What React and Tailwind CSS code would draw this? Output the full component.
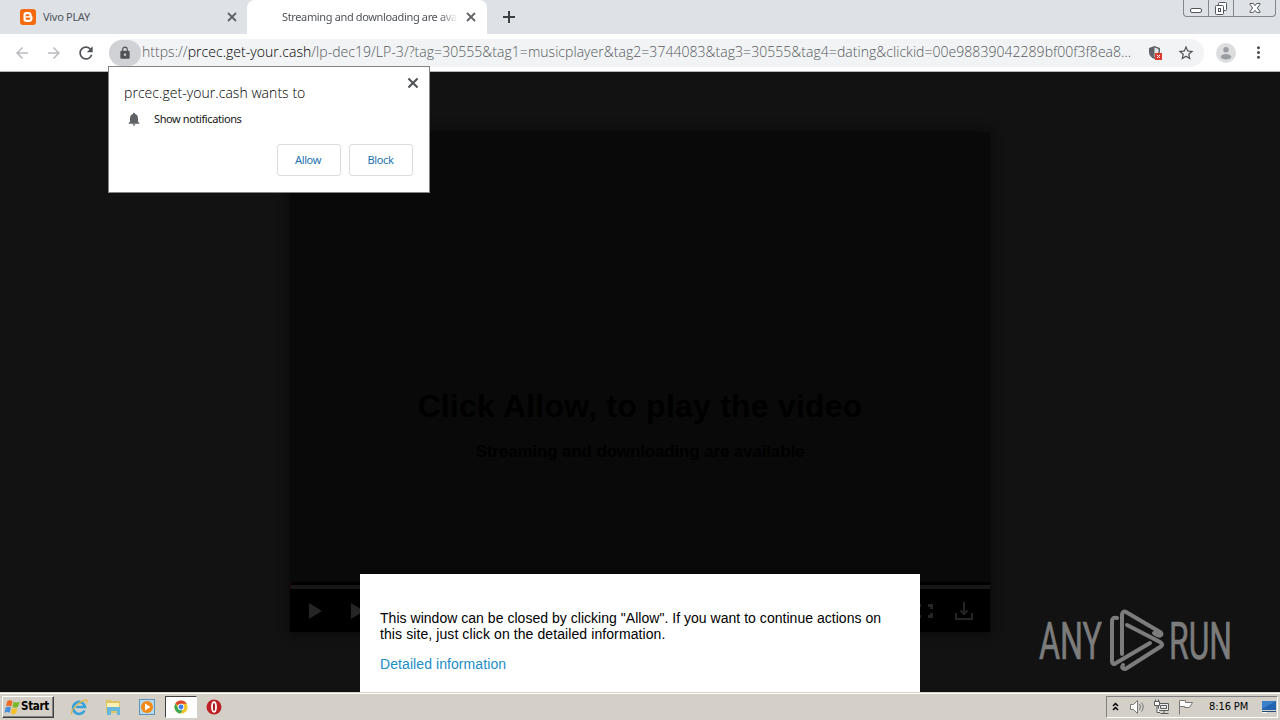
import React from 'react';
import {
  MdArrowBack,
  MdArrowForward,
  MdRefresh,
  MdLock,
  MdStarBorder,
  MdMoreVert,
  MdNotifications,
} from 'react-icons/md';

const CloseIcon = ({ className }) => (
  <svg viewBox="0 0 14 14" className={className} fill="none" stroke="currentColor" strokeWidth="1.8">
    <path d="M3 3l8 8M11 3l-8 8" />
  </svg>
);

const TabStrip = () => (
  <div className="flex h-[34px] shrink-0 bg-[#dee1e6] font-['Noto_Sans',sans-serif] text-[11px] text-[#50545a]">
    <div className="flex w-[247px] items-center pr-[8px] pl-5">
      <div className="flex h-4 w-4 items-center justify-center rounded-[3px] bg-[#f56a0e]">
        <svg viewBox="0 0 16 16" className="h-4 w-4" fill="none" stroke="white" strokeWidth="2.2">
          <path d="M4.6 5.8a1.6 1.6 0 0 1 1.6-1.6h2.3c1.2 0 2 .8 2 2v.9c0 .5.9.4.9 1v1.4c0 1.4-1 2.3-2.3 2.3H6.2a1.6 1.6 0 0 1-1.6-1.6z" />
          <path d="M6 7.9h4" strokeWidth="1.4" />
        </svg>
      </div>
      <span className="ml-[7px] flex-1 tracking-[-0.3px]">Vivo PLAY</span>
      <CloseIcon className="h-[14px] w-[14px] text-[#5f6368]" />
    </div>
    <div className="flex w-[240px] items-center rounded-t-lg bg-white pr-[9px] pl-[35px]">
      <div className="w-[176px] overflow-hidden whitespace-nowrap tracking-[-0.36px] [mask-image:linear-gradient(90deg,black_90%,transparent)]">
        Streaming and downloading are available
      </div>
      <div className="flex-1" />
      <CloseIcon className="h-[14px] w-[14px] text-[#5f6368]" />
    </div>
    <svg viewBox="0 0 18 18" className="mt-[8px] ml-[13px] h-[18px] w-[18px]" stroke="#3c4043" strokeWidth="2">
      <path d="M9 3v12M3 9h12" />
    </svg>
    <div className="flex-1" />
    <div className="mr-[4px] flex h-[17px] rounded-b-[4px] border border-t-0 border-[#83878e] text-[#51555c]">
      <div className="flex w-[25px] justify-center border-r border-[#83878e]">
        <svg width="14" height="16" fill="white" stroke="currentColor">
          <rect x="1.5" y="8.5" width="11" height="4" rx="1.5" />
        </svg>
      </div>
      <div className="flex w-[25px] justify-center border-r border-[#83878e]">
        <svg width="14" height="16" fill="white" stroke="currentColor">
          <rect x="4.5" y="2.5" width="8" height="8" rx="1" />
          <rect x="1.5" y="5.5" width="8" height="9" rx="1" />
          <rect x="4.5" y="8.5" width="2" height="3" />
        </svg>
      </div>
      <div className="flex w-[41px] justify-center">
        <svg width="14" height="16" fill="white" stroke="currentColor">
          <path d="M2 3.5h3.3L7 5.7l1.7-2.2H12v1L9.3 8l2.7 3.4v1H8.7L7 10.3l-1.7 2.1H2v-1L4.7 8 2 4.5z" />
        </svg>
      </div>
    </div>
  </div>
);

const Toolbar = () => (
  <div className="flex h-[38px] shrink-0 items-center border-b border-[#b4b6b9] bg-white pl-[13px]">
    <MdArrowBack className="h-[18px] w-[18px] text-[#b9bbbe]" />
    <MdArrowForward className="ml-[14px] h-[18px] w-[18px] text-[#b9bbbe]" />
    <MdRefresh className="ml-[13px] h-5 w-5 text-[#4f5357]" />
    <div className="ml-[13px] flex h-[28px] w-[1095px] items-center rounded-full bg-[#f1f3f4]">
      <div className="flex h-[26px] w-[32px] shrink-0 items-center justify-center rounded-full bg-[#d0d2d5]">
        <MdLock className="h-[14px] w-[14px] text-[#505357]" />
      </div>
      <div className="w-[996px] shrink-0 pb-[2px] pl-px whitespace-nowrap font-['Open_Sans',sans-serif] text-[14px] font-light tracking-[0.04px] text-[#55595d]">
        https://<span className="text-black">prcec.get-your.cash</span>
        /lp-dec19/LP-3/?tag=30555&amp;tag1=musicplayer&amp;tag2=3744083&amp;tag3=30555&amp;tag4=dating&amp;clickid=00e98839042289bf00f3f8ea8...
      </div>
      <svg viewBox="0 0 16 16" className="ml-[10px] h-4 w-4 shrink-0">
        <path d="M7.5 1l5.5 2v4c0 3.5-2.2 5.8-5.5 7C4.2 12.8 2 10.5 2 7V3z" fill="#5f6368" />
        <path d="M7.5 2.5v10c2.5-1 4-3 4-5.5V4z" fill="#e4e7e9" />
        <rect x="8" y="8" width="7" height="7" fill="#d93a30" />
        <path d="M10 10l3 3M13 10l-3 3" stroke="white" />
      </svg>
      <MdStarBorder className="ml-[14px] h-[18px] w-[18px] shrink-0 text-[#4f5357]" />
    </div>
    <svg viewBox="0 0 20 20" className="ml-[12px] h-5 w-5">
      <circle cx="10" cy="10" r="10" fill="#dcdddf" />
      <circle cx="10" cy="6.8" r="2.7" fill="#999ca0" />
      <ellipse cx="10" cy="13.8" rx="5.3" ry="2.7" fill="#999ca0" />
    </svg>
    <MdMoreVert className="ml-[13px] h-[19px] w-[19px] text-[#4f5357]" />
  </div>
);

const PermissionBubble = () => (
  <div className="absolute top-[66px] left-[108px] flex h-[127px] w-[322px] flex-col border border-[#858585] bg-white pr-4 pl-[15px] font-['Noto_Sans',sans-serif] text-[11px] text-[#151515]">
    <div className="flex h-[38px] items-end justify-between">
      <div className="mb-[3px] font-['Open_Sans',sans-serif] text-[14px] leading-[19px] font-light tracking-[0.05px] text-black">
        prcec.get-your.cash wants to
      </div>
      <CloseIcon className="mr-[-8px] mb-[14px] h-4 w-4 text-[#505357]" />
    </div>
    <div className="mt-[5px] flex h-[18px] items-center pl-[2px]">
      <MdNotifications className="h-[18px] w-4 text-[#5f6368]" />
      <span className="ml-[12px] tracking-[-0.4px]">Show notifications</span>
    </div>
    <div className="mt-[16px] flex justify-end gap-2 tracking-[-0.4px] text-[#1b72b0]">
      <button className="h-8 w-16 rounded-[3px] border border-[#dadce0] pr-[2px]">Allow</button>
      <button className="h-8 w-16 rounded-[3px] border border-[#dadce0] pr-[1px]">Block</button>
    </div>
  </div>
);

const Player = () => (
  <div className="flex h-[500px] w-[700px] flex-col bg-[#090909] text-center font-['Liberation_Sans',sans-serif] font-bold text-black shadow-[0_0_10px_#080808]">
    <div className="h-[450px] pt-[254px]">
      <div className="text-[32px] leading-[41px] tracking-[0.22px]">Click Allow, to play the video</div>
      <div className="mt-[15px] text-[17px] leading-5 tracking-[-0.15px]">Streaming and downloading are available</div>
    </div>
    <div className="flex h-[7px] items-center border-l border-[#250608] bg-black">
      <div className="mt-[2px] h-[4px] flex-1 bg-[#171717]" />
    </div>
    <div className="flex flex-1 items-center bg-black pl-[18px] text-[#252525]">
      <svg width="14" height="16" fill="currentColor">
        <path d="M1 0v16l13-8z" />
      </svg>
      <svg width="14" height="16" fill="currentColor" className="ml-[28px]">
        <path d="M1 0v16l13-8z" />
      </svg>
      <div className="flex-1" />
      <svg width="18" height="14" fill="none" stroke="currentColor" strokeWidth="3">
        <path d="M5 1.5H1.5V5M12 1.5h3.5V5M5 12.5H1.5V9M12 12.5h3.5V9" />
      </svg>
      <svg width="20" height="20" fill="none" stroke="currentColor" strokeWidth="2" className="mr-4 ml-[20px]">
        <path d="M2 12v6h16v-6M10 1v11M6.5 9.5L10 13l3.5-3.5" />
      </svg>
    </div>
  </div>
);

const Watermark = () => (
  <svg viewBox="0 0 230 80" className="absolute top-[600px] left-[1030px] h-20 w-[230px] text-[#7c7c7c]" fill="currentColor">
    <g fontFamily="Roboto, sans-serif" fontSize="52" stroke="currentColor" strokeWidth="0.7">
      <text x="9" y="59" textLength="63" lengthAdjust="spacingAndGlyphs">ANY</text>
      <text x="139" y="59" textLength="63" lengthAdjust="spacingAndGlyphs">RUN</text>
    </g>
    <g fill="none" stroke="currentColor" strokeWidth="4" strokeLinejoin="round" strokeLinecap="round">
      <path d="M87 18c-3-1-5 0-5 4v39c0 3 2 4 4 2l34-20" />
      <path d="M92 54V15c0-3 2-4 4-3l34 20c3 2 1 5-3 3l-3-2" />
      <path d="M97 25l33 17c3 2 3 3 0 5L97 68c-3 2-6 0-4-3" />
    </g>
  </svg>
);

const Taskbar = () => (
  <div className="flex h-[28px] shrink-0 items-center border-t border-[#d4d0c8] bg-[#d4d0c8] pl-[2px] font-['DejaVu_Sans_Condensed','DejaVu_Sans',sans-serif] text-[11px] text-black shadow-[inset_0_1px_0_white]">
    <div className="mt-[1px] flex h-[22px] w-[52px] items-center border border-t-white border-r-[#404040] border-b-[#404040] border-l-white pl-[1px] shadow-[inset_-1px_-1px_0_#808080]">
      <svg viewBox="0 0 16 16" className="h-[17px] w-[17px] shrink-0">
        <path d="M3 2c2-1 3-1 5 0L7 7C5 6 4 6 2 7z" fill="#ed6b23" />
        <path d="M9 2.5c2 1 4 1 6 0l-2 5c-2 1-3 1-5 0z" fill="#79b82b" />
        <path d="M1.5 8c2-1 4-1 5 0l-1 5c-2-1-3-1-5 0z" fill="#4a8fdb" />
        <path d="M7.5 8.5c2 1 4 1 5 0l-1 5c-2 1-4 1-5 0z" fill="#f5bf28" />
      </svg>
      <span className="text-[11.5px] font-bold tracking-[-0.3px]">Start</span>
    </div>
    <svg viewBox="0 0 18 18" className="mt-[1px] ml-[16px] h-[18px] w-[18px]" fill="none">
      <path d="M14.5 12.5A6 6 0 1 1 15 9H6" stroke="#37a2dc" strokeWidth="2.6" />
      <path d="M2 16c-3-3 9-14 14-14 2 0 1 2 0 3" stroke="#e2b946" strokeWidth="1.3" />
    </svg>
    <svg viewBox="0 0 18 18" className="mt-[1px] ml-[16px] h-[18px] w-[18px]">
      <path d="M2 2h5l1 1h8v12H2z" fill="#dfc463" />
      <path d="M3 5h12v4H3z" fill="#faf0b5" />
      <path d="M3 17V9h13v8h-3v-4H7v4z" fill="#67b6dd" />
    </svg>
    <svg viewBox="0 0 18 18" className="mt-[1px] ml-[16px] h-[18px] w-[18px]">
      <rect x="1.5" y="1.5" width="15" height="15" fill="#b8d8ed" stroke="#5b96c2" />
      <circle cx="9" cy="9" r="6" fill="#f28a19" />
      <path d="M7 5.5v7L12.5 9z" fill="white" />
    </svg>
    <div className="mt-[1px] ml-[9px] flex h-[22px] w-[32px] items-center justify-center border border-t-[#404040] border-r-white border-b-white border-l-[#404040] bg-white">
      <svg viewBox="0 0 16 16" className="h-[14px] w-[14px]">
        <circle cx="8" cy="8" r="7.5" fill="#f4c52b" />
        <path d="M8 8L1.5 4.3A7.5 7.5 0 0 1 14.5 4.3H8z" fill="#df4632" />
        <path d="M1.5 4.3A7.5 7.5 0 0 0 7.5 15.5L11 9.5H5z" fill="#3ca756" />
        <circle cx="8" cy="8" r="3.7" fill="white" />
        <circle cx="8" cy="8" r="2.8" fill="#4280e8" />
      </svg>
    </div>
    <svg viewBox="0 0 16 16" className="mt-[1px] ml-[9px] h-4 w-4">
      <circle cx="8" cy="8" r="7.5" fill="#bd2025" />
      <ellipse cx="8" cy="8" rx="2" ry="4.8" fill="#a91a20" stroke="white" strokeWidth="1.8" />
    </svg>
    <div className="flex-1" />
    <div className="mt-[1px] mr-[2px] flex h-[22px] w-[172px] items-center border border-t-[#808080] border-r-white border-b-white border-l-[#808080] pl-[5px]">
      <svg width="7" height="11" fill="none" stroke="black" strokeWidth="1.5">
        <path d="M1 4l2.5-2.5L6 4M1 8l2.5-2.5L6 8" />
      </svg>
      <svg width="17" height="16" fill="white" stroke="#777" className="ml-[10px]">
        <path d="M1.5 5.5h3l4-4v13l-4-4h-3z" />
        <path d="M10.5 5q2 3 0 6M12.5 3.5q3.5 4.5 0 9" fill="none" />
      </svg>
      <svg width="17" height="16" fill="#e8e8e8" stroke="#5c5c5c" className="ml-[7px]">
        <path d="M5.5 4.5h10v7h-10zM7.5 14.5h8M11 11.5v3" />
        <path d="M7.5 6.5h6v3h-6z" />
        <path d="M2.5 .5v2m3-2v2M1.5 2.5h5v4h-5zM4 6.5v7h3" fill="white" />
      </svg>
      <svg width="17" height="16" fill="white" stroke="#777" className="ml-[7px]">
        <path d="M2.5 15.5v-14h6v2h7l-3 5h-5v-1h-5" />
      </svg>
      <span className="mt-[1px] ml-[15px] whitespace-nowrap tracking-[-0.1px]">8:16 PM</span>
      <svg width="16" height="14" className="ml-auto">
        <path d="M1 1h14v9H1z" fill="#2363b0" />
        <path d="M1 1h14L1 9z" fill="#3a80cb" />
        <path d="M1 11h14v1H1z" fill="#244d7c" />
        <path d="M1 12h5v1H1z" fill="white" />
      </svg>
    </div>
  </div>
);

const App = () => {
  return (
    <div className="relative flex h-screen w-full flex-col overflow-hidden bg-[#121212]">
      <TabStrip />
      <Toolbar />
      <div className="relative flex flex-1 justify-center overflow-hidden pt-[60px]">
        <Player />
        {/* Notice over the player */}
        <div className="absolute bottom-0 left-[360px] h-[118px] w-[560px] bg-white px-5 pt-[36px] font-['Liberation_Sans',sans-serif] text-[14px] leading-4 text-black">
          <p className="whitespace-nowrap tracking-[0.03px]">
            This window can be closed by clicking "Allow". If you want to continue actions on
            <br />
            <span className="tracking-[0.09px]">this site, just click on the detailed information.</span>
          </p>
          <p className="mt-[14px] tracking-[0.08px] text-[#218dc5]">Detailed information</p>
        </div>
      </div>
      <Taskbar />
      <Watermark />
      <PermissionBubble />
    </div>
  );
};

export default App;
